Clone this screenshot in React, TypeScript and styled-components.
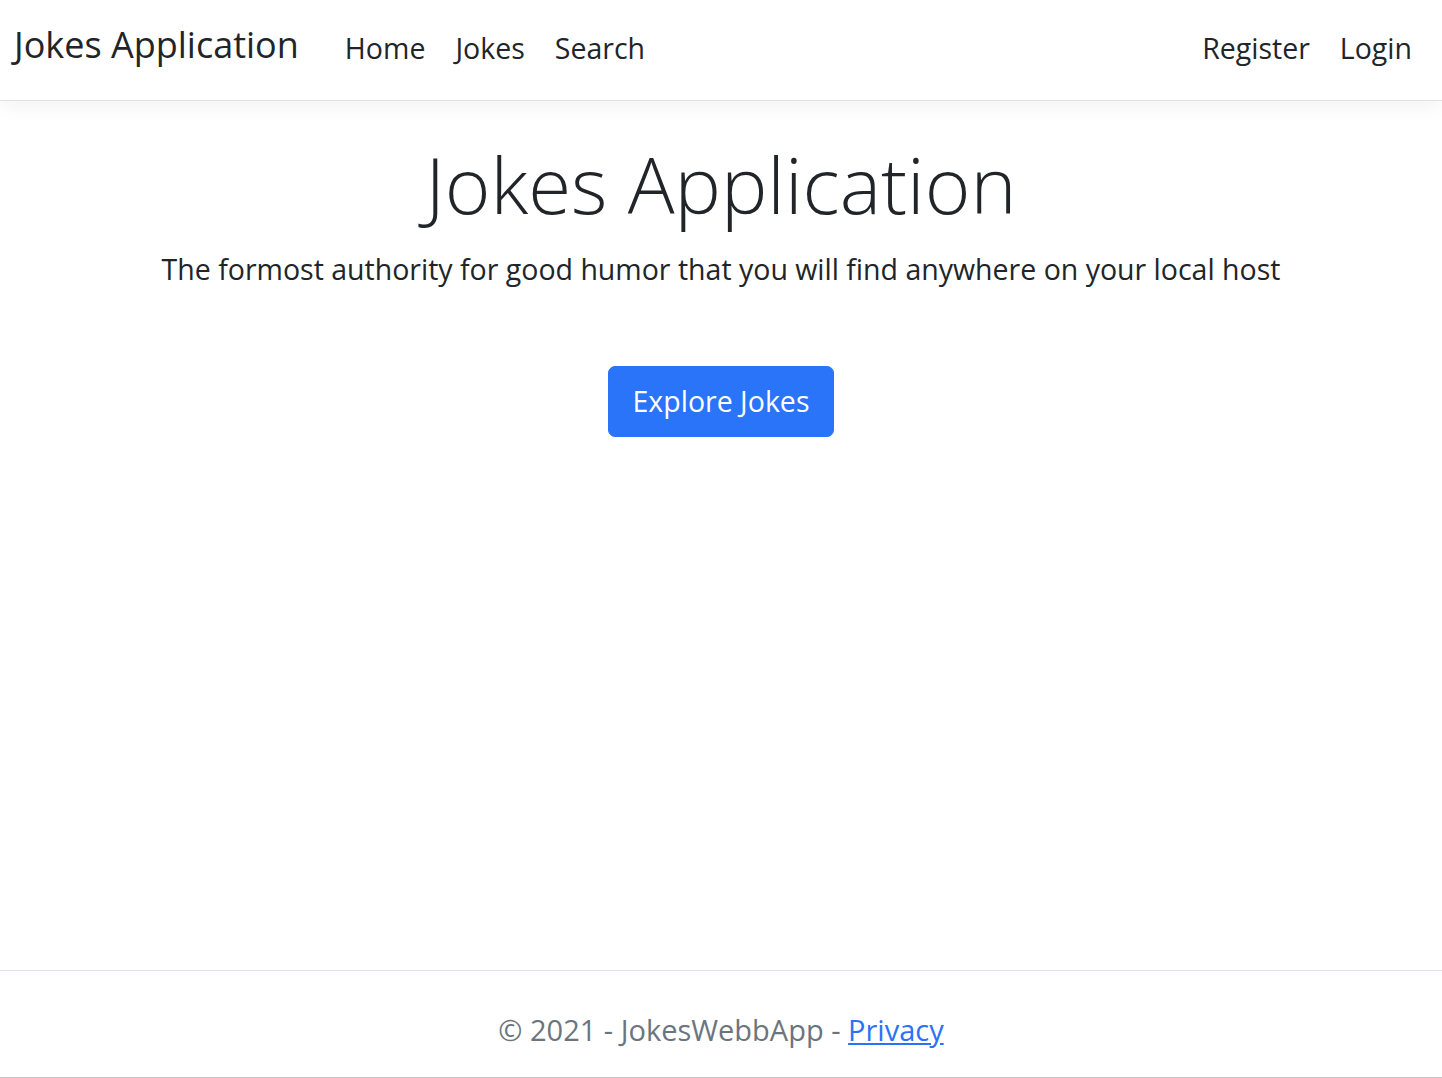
import React from "react";
import styled, { createGlobalStyle } from "styled-components";

const Global = createGlobalStyle`
  html, body { margin: 0; padding: 0; }
  body {
    font-family: "Open Sans", "Noto Sans", Arial, sans-serif;
    color: #212529;
    background: #ffffff;
  }
  * { box-sizing: border-box; }
`;

const Page = styled.div`
  display: flex;
  flex-direction: column;
  min-height: 1078px;
`;

const NavBar = styled.header`
  height: 101px;
  border-bottom: 1px solid #dee2e6;
  box-shadow: 0 6px 18px rgba(0, 0, 0, 0.05);
  display: flex;
  align-items: center;
  padding: 0 15px 5px 14px;
  background: #fff;
  position: relative;
  z-index: 1;
`;

const Brand = styled.a`
  font-size: 36px;
  color: #212529;
  text-decoration: none;
  margin: 0 31px 5px 0;
  line-height: 54px;
  white-space: nowrap;
`;

const NavList = styled.nav<{ $end?: boolean }>`
  display: flex;
  align-items: center;
  margin-left: ${(p) => (p.$end ? "auto" : "0")};
`;

const NavLink = styled.a`
  font-size: 28.5px;
  line-height: 42px;
  padding: 0 15px;
  color: #212529;
  text-decoration: none;
  white-space: nowrap;
`;

const Main = styled.main`
  flex: 1;
  display: flex;
  flex-direction: column;
  align-items: center;
  padding-top: 37px;
`;

const Title = styled.h1`
  font-size: 78px;
  font-weight: 300;
  line-height: 1.2;
  margin: 0 0 16px;
  text-align: center;
`;

const Lead = styled.p`
  font-size: 28.5px;
  font-weight: 400;
  line-height: 1.5;
  margin: 0 0 76px;
  text-align: center;
`;

const PrimaryButton = styled.a`
  display: inline-block;
  background: #2a74fa;
  border: 1px solid #2a74fa;
  color: #fff;
  font-size: 28.5px;
  line-height: 45px;
  padding: 12px 24px;
  border-radius: 7px;
  text-decoration: none;
`;

const Footer = styled.footer`
  height: 108px;
  border-top: 1px solid #dee2e6;
  border-bottom: 1px solid #c8c8c8;
  display: flex;
  align-items: center;
  justify-content: center;
  font-size: 29px;
  color: #6c757d;
  padding-top: 10px;
`;

const FooterLink = styled.a`
  color: #2a72f8;
  text-decoration: underline;
`;

export default function App() {
  return (
    <Page>
      <Global />
      <NavBar>
        <Brand href="#">Jokes Application</Brand>
        <NavList>
          <NavLink href="#">Home</NavLink>
          <NavLink href="#">Jokes</NavLink>
          <NavLink href="#">Search</NavLink>
        </NavList>
        <NavList $end>
          <NavLink href="#">Register</NavLink>
          <NavLink href="#">Login</NavLink>
        </NavList>
      </NavBar>
      <Main>
        <Title>Jokes Application</Title>
        <Lead>The formost authority for good humor that you will find anywhere on your local host</Lead>
        <PrimaryButton href="#">Explore Jokes</PrimaryButton>
      </Main>
      <Footer>
        <span>
          © 2021 - JokesWebbApp - <FooterLink href="#">Privacy</FooterLink>
        </span>
      </Footer>
    </Page>
  );
}
